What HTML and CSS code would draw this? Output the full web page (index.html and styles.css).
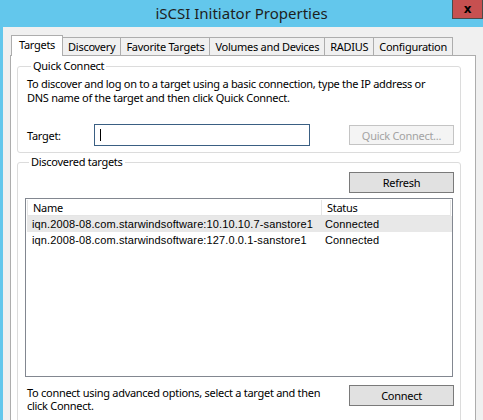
FILE: index.html
```html
<!DOCTYPE html>
<html lang="en">
<head>
    <meta charset="UTF-8">
    <title>iSCSI Initiator Properties</title>
    <link rel="stylesheet" href="styles.css">
</head>
<body>
    <div class="window">
        <div class="titlebar">
            <span class="title">iSCSI Initiator Properties</span>
            <button class="close">x</button>
        </div>
        <div class="content">
            <div class="tabs">
                <div class="tab active">Targets</div>
                <div class="tab">Discovery</div>
                <div class="tab">Favorite Targets</div>
                <div class="tab">Volumes and Devices</div>
                <div class="tab">RADIUS</div>
                <div class="tab">Configuration</div>
            </div>
            <div class="panel">
                <fieldset class="group quick">
                    <legend>Quick Connect</legend>
                    <p class="hint">To discover and log on to a target using a basic connection, type the IP address or DNS name of the target and then click Quick Connect.</p>
                    <div class="target-row">
                        <label for="target">Target:</label>
                        <span class="field">
                            <input id="target" type="text">
                            <span class="caret"></span>
                        </span>
                        <button class="btn" disabled>Quick Connect...</button>
                    </div>
                </fieldset>
                <fieldset class="group discovered">
                    <legend>Discovered targets</legend>
                    <div class="refresh-row">
                        <button class="btn">Refresh</button>
                    </div>
                    <div class="list">
                        <div class="row header">
                            <div class="col-name">Name</div>
                            <div class="col-status">Status</div>
                        </div>
                        <div class="row hover">
                            <div class="col-name">iqn.2008-08.com.starwindsoftware:10.10.10.7-sanstore1</div>
                            <div class="col-status">Connected</div>
                        </div>
                        <div class="row">
                            <div class="col-name">iqn.2008-08.com.starwindsoftware:127.0.0.1-sanstore1</div>
                            <div class="col-status">Connected</div>
                        </div>
                    </div>
                    <div class="connect-row">
                        <p class="hint">To connect using advanced options, select a target and then click Connect.</p>
                        <button class="btn">Connect</button>
                    </div>
                </fieldset>
            </div>
        </div>
    </div>
</body>
</html>
```

FILE: styles.css
```css
body {
    margin: 0;
    font-family: "Noto Sans", sans-serif;
    font-size: 11px;
    letter-spacing: -0.28px;
    color: #000;
    background-color: #f0f0f0;
}
.window {
    width: 483px;
    height: 420px;
    box-sizing: border-box;
    border-left: 3px solid #63c7ec;
    background-color: #f0f0f0;
    overflow: hidden;
}
.titlebar {
    position: relative;
    height: 27px;
    margin-left: -3px;
    background-color: #63c7ec;
    text-align: center;
    line-height: 27px;
}
.title {
    font-size: 15px;
    letter-spacing: 0;
    color: #1e1e1e;
}
.close {
    position: absolute;
    top: 0;
    right: 0;
    width: 31px;
    height: 19px;
    padding: 0;
    border: 1px solid #4a4a4a;
    border-top: none;
    background-color: #c75050;
    color: #000;
    font-family: "DejaVu Sans", sans-serif;
    font-weight: bold;
    font-size: 12px;
    line-height: 16px;
}
.content {
    padding: 8px 0 0 7px;
}
.tabs {
    display: flex;
    align-items: flex-end;
    height: 20px;
    margin-left: 1px;
}
.tab {
    height: 17px;
    padding: 0 5px;
    border: 1px solid #adadad;
    border-bottom: none;
    border-left: none;
    background-color: #f0f0f0;
    line-height: 17px;
}
.tab:first-child {
    border-left: 1px solid #adadad;
}
.tab.active {
    height: 20px;
    margin-bottom: -1px;
    padding: 0 7px;
    background-color: #fff;
    position: relative;
    line-height: 18px;
}
.panel {
    width: 466px;
    height: 400px;
    box-sizing: border-box;
    padding: 3px 14px 0 6px;
    border: 1px solid #adadad;
    background-color: #fff;
}
.group {
    margin: 0;
    border: 1px solid #dcdcdc;
    border-radius: 3px;
}
.group legend {
    padding: 0 2px;
    margin-left: 4px;
    line-height: 14px;
}
.quick {
    padding: 4px 6px 6px 9px;
}
.hint {
    margin: 0;
    line-height: 14px;
}
.quick .hint {
    width: 405px;
}
.target-row {
    display: flex;
    align-items: center;
    margin-top: 19px;
    height: 22px;
}
.target-row label {
    width: 67px;
}
.field {
    position: relative;
    display: block;
    height: 22px;
}
.target-row input {
    display: block;
    width: 216px;
    height: 22px;
    box-sizing: border-box;
    border: 1px solid #3a5f83;
    padding: 0 5px;
    font: inherit;
    outline: none;
}
.caret {
    position: absolute;
    left: 6px;
    top: 5px;
    width: 1px;
    height: 12px;
    background-color: #000;
}
.btn {
    width: 105px;
    height: 21px;
    box-sizing: border-box;
    border: 1px solid #adadad;
    background-color: #e1e1e1;
    font: inherit;
    letter-spacing: -0.28px;
    color: #000;
    padding: 0;
}
.target-row .btn {
    height: 20px;
    margin-left: auto;
}
.btn:disabled {
    border-color: #c4c4c4;
    background-color: #f4f4f4;
    color: #a3a3a3;
}
.discovered {
    margin-top: 2px;
    padding: 3px 6px 20px 7px;
}
.refresh-row {
    display: flex;
    justify-content: flex-end;
}
.refresh-row .btn,
.connect-row .btn {
    border-color: #7a7a7a;
}
.list {
    height: 179px;
    box-sizing: border-box;
    margin: 5px 1px 0 0;
    border: 1px solid #828790;
    padding: 1px 0 0 1px;
    font-family: "Liberation Sans", sans-serif;
    letter-spacing: 0.12px;
}
.row {
    display: flex;
    height: 16px;
    line-height: 16px;
}
.row .col-name {
    width: 288px;
    padding-left: 5px;
}
.row .col-status {
    padding-left: 5px;
}
.header {
    height: 15px;
    border: 1px solid #e5e5e5;
    border-top: none;
    margin-right: 1px;
    font-family: "Noto Sans", sans-serif;
    letter-spacing: -0.28px;
}
.header .col-name {
    border-right: 1px solid #e5e5e5;
}
.hover {
    background-color: #e8e8e8;
}
.connect-row {
    display: flex;
    align-items: flex-start;
    margin-top: 8px;
    padding-left: 2px;
}
.connect-row .hint {
    width: 310px;
    line-height: 13px;
    margin-top: 1px;
}
.connect-row .btn {
    margin-left: auto;
}
```
